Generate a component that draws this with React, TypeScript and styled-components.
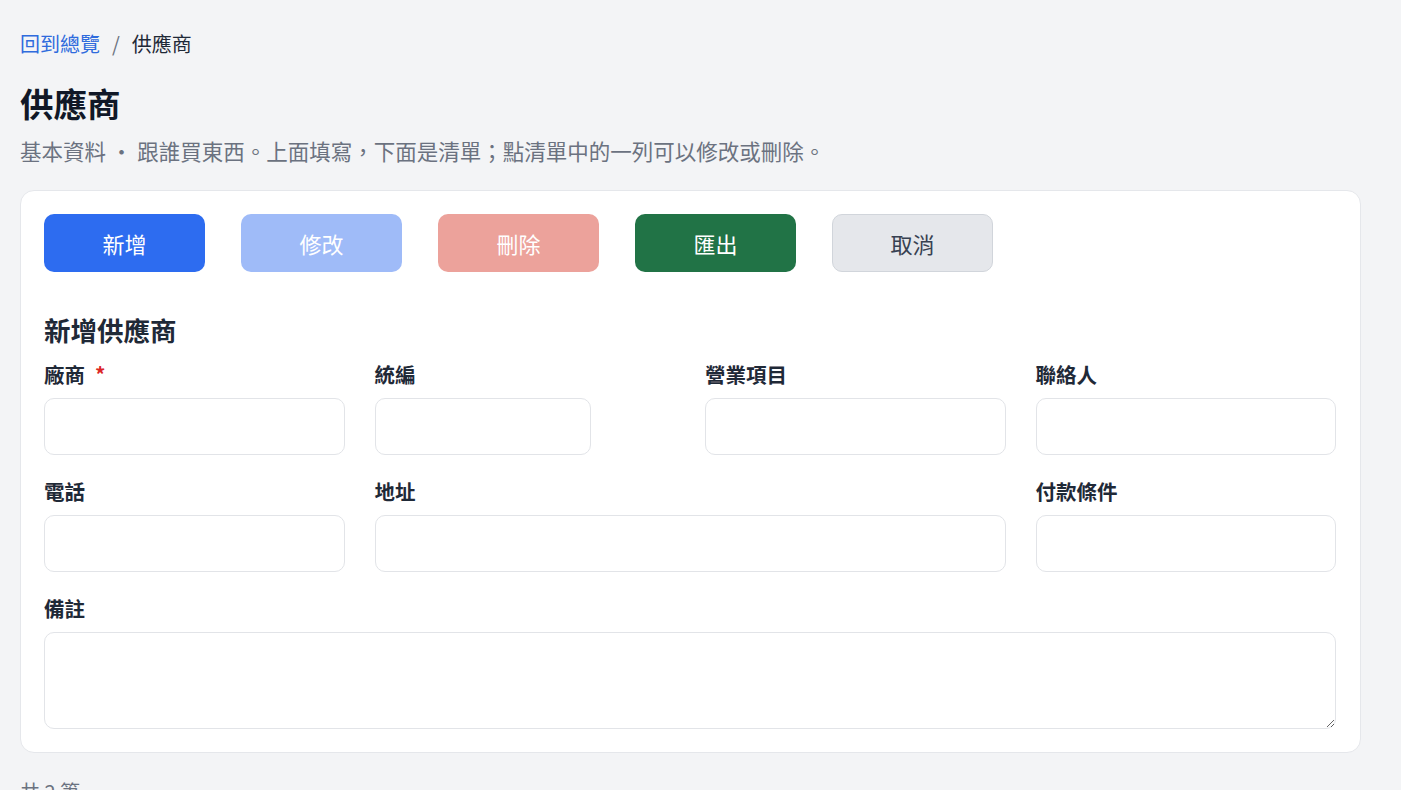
import styled, { createGlobalStyle, css } from "styled-components";

const GlobalStyle = createGlobalStyle`
  body {
    margin: 0;
    background: #f3f4f6;
    font-family: "Noto Sans CJK TC", "Noto Sans", sans-serif;
    color: #1f2937;
  }
`;

const Page = styled.div`
  padding: 28px 20px 0 20px;
  max-width: 1341px;
`;

const Breadcrumb = styled.nav`
  display: flex;
  align-items: center;
  gap: 12px;
  font-size: 20px;
  line-height: 32px;
`;

const Crumb = styled.a`
  color: #2f6bdd;
  text-decoration: none;
`;

const Sep = styled.span`
  color: #6b7280;
`;

const Current = styled.span`
  color: #1f2937;
`;

const Title = styled.h1`
  margin: 21px 0 0 0;
  font-size: 33.5px;
  line-height: 44px;
  font-weight: 700;
  color: #111827;
`;

const Subtitle = styled.p`
  margin: 11px 0 0 0;
  font-size: 21.5px;
  line-height: 30px;
  color: #6b7280;
`;

const Card = styled.section`
  margin-top: 24px;
  background: #fff;
  border: 1px solid #e5e7eb;
  border-radius: 14px;
  padding: 23px 24px 23px 23px;
`;

const Toolbar = styled.div`
  display: flex;
  gap: 36px;
`;

type Variant = "primary" | "edit" | "danger" | "export" | "cancel";

const variants: Record<Variant, ReturnType<typeof css>> = {
  primary: css`
    background: #2d6cf0;
    color: #fff;
  `,
  edit: css`
    background: #9fbbf8;
    color: #fff;
  `,
  danger: css`
    background: #eca29b;
    color: #fff;
  `,
  export: css`
    background: #217346;
    color: #fff;
  `,
  cancel: css`
    background: #e5e7eb;
    color: #374151;
    border-color: #d1d5db;
  `,
};

const Button = styled.button<{ $variant: Variant }>`
  width: 161px;
  height: 58px;
  border: 1px solid transparent;
  border-radius: 10px;
  font-family: inherit;
  font-size: 22px;
  cursor: pointer;
  ${(p) => variants[p.$variant]}
`;

const FormTitle = styled.h2`
  margin: 40px 0 0 0;
  font-size: 26.5px;
  line-height: 36px;
  font-weight: 700;
  color: #1f2937;
`;

const Grid = styled.div`
  margin-top: 15px;
  display: grid;
  grid-template-columns: repeat(4, 1fr);
  column-gap: 30px;
  row-gap: 25px;
`;

const Field = styled.div<{ $span?: number }>`
  display: flex;
  flex-direction: column;
  gap: 13px;
  grid-column: span ${(p) => p.$span || 1};
`;

const Label = styled.label`
  font-size: 20.5px;
  line-height: 22px;
  font-weight: 700;
  color: #1f2937;
`;

const Required = styled.span`
  color: #dc2626;
  margin-left: 10px;
`;

const inputBase = css`
  box-sizing: border-box;
  border: 1px solid #e2e4e8;
  border-radius: 10px;
  background: #fff;
  font-family: inherit;
  font-size: 18px;
  padding: 0 14px;
  outline: none;
`;

const Input = styled.input<{ $narrow?: boolean }>`
  ${inputBase}
  height: 57px;
  width: ${(p) => (p.$narrow ? "216px" : "100%")};
`;

const TextArea = styled.textarea`
  ${inputBase}
  height: 97px;
  width: 100%;
  padding: 12px 14px;
  resize: vertical;
`;

const Footer = styled.div`
  margin-top: 24px;
  font-size: 20px;
  line-height: 30px;
  color: #6b7280;
  padding-bottom: 40px;
`;

export default function App() {
  return (
    <>
      <GlobalStyle />
      <Page>
        <Breadcrumb>
          <Crumb href="#">回到總覽</Crumb>
          <Sep>/</Sep>
          <Current>供應商</Current>
        </Breadcrumb>
        <Title>供應商</Title>
        <Subtitle>
          基本資料 ・ 跟誰買東西。上面填寫，下面是清單；點清單中的一列可以修改或刪除。
        </Subtitle>

        <Card>
          <Toolbar>
            <Button $variant="primary">新增</Button>
            <Button $variant="edit">修改</Button>
            <Button $variant="danger">刪除</Button>
            <Button $variant="export">匯出</Button>
            <Button $variant="cancel">取消</Button>
          </Toolbar>

          <FormTitle>新增供應商</FormTitle>
          <Grid>
            <Field>
              <Label>
                廠商<Required>*</Required>
              </Label>
              <Input />
            </Field>
            <Field>
              <Label>統編</Label>
              <Input $narrow />
            </Field>
            <Field>
              <Label>營業項目</Label>
              <Input />
            </Field>
            <Field>
              <Label>聯絡人</Label>
              <Input />
            </Field>
            <Field>
              <Label>電話</Label>
              <Input />
            </Field>
            <Field $span={2}>
              <Label>地址</Label>
              <Input />
            </Field>
            <Field>
              <Label>付款條件</Label>
              <Input />
            </Field>
            <Field $span={4}>
              <Label>備註</Label>
              <TextArea />
            </Field>
          </Grid>
        </Card>

        <Footer>共 2 筆</Footer>
      </Page>
    </>
  );
}
